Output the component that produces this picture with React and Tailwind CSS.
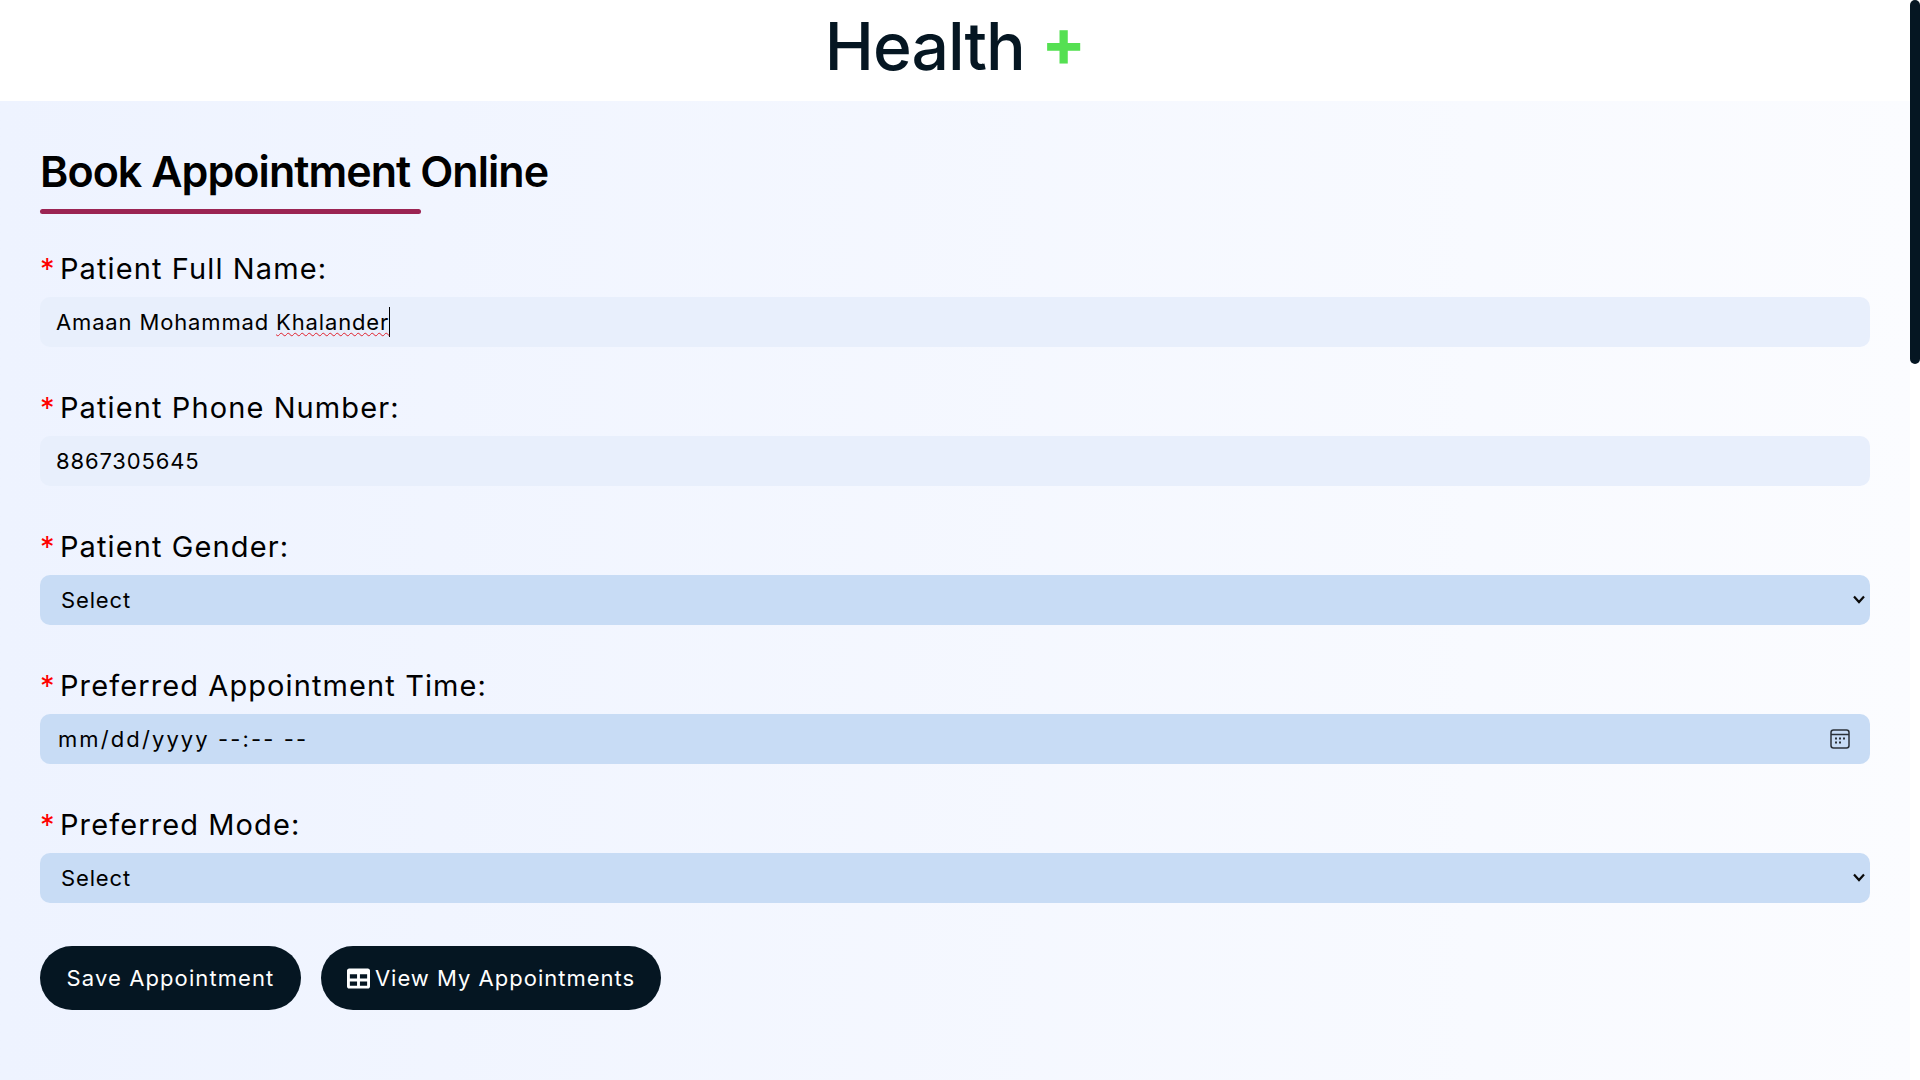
import React from "react";
import { FaTable } from "react-icons/fa";

const body = "font-['Inter','Liberation_Sans',sans-serif]";
const head = "font-['Inter','Liberation_Sans',sans-serif]";
const fieldText = "text-[22px] tracking-[0.85px] text-black";

function Label({ children }) {
  return (
    <label className={`${body} flex items-center h-[50px] text-[29px] tracking-[1.1px] text-black`}>
      <span className="text-[#ff0000] mr-[7px] w-[13px]">*</span>
      {children}
    </label>
  );
}

function Field({ label, children }) {
  return (
    <div className="flex flex-col h-[139px]">
      <div className="h-[89px] flex flex-col justify-end pb-[3px]">
        <Label>{label}</Label>
      </div>
      {children}
    </div>
  );
}

const lightInput = `${body} ${fieldText} w-full h-[50px] rounded-[10px] bg-[#e8effc] px-4 outline-none`;
const strongInput = `${body} ${fieldText} w-full h-[50px] rounded-[10px] bg-[#c8dcf5] outline-none`;

function SelectField({ options }) {
  return (
    <div className="relative">
      <select className={`${strongInput} appearance-none pl-[21px]`} defaultValue="">
        <option value="">Select</option>
        {options.map((o) => (
          <option key={o}>{o}</option>
        ))}
      </select>
      <svg className="absolute right-[5px] top-[20px] w-[12px] h-[9px] pointer-events-none" viewBox="0 0 12 9" fill="none">
        <path d="M1 1.5 L6 7 L11 1.5" stroke="#0a0a0a" strokeWidth="2.2" />
      </svg>
    </div>
  );
}

export default function App() {
  return (
    <div className="flex h-screen w-full overflow-hidden bg-white">
      <div className="flex-1 min-w-0 flex flex-col">
        <header className="h-[101px] flex items-center justify-center bg-white">
          <div className={`${head} text-[66px] font-medium tracking-[-1px] text-[#051622] leading-none pb-[10px]`}>
            Health <span className="inline-block -translate-y-[4px] text-[#55e052] font-bold">+</span>
          </div>
        </header>
        <main className="flex-1 px-10 bg-gradient-to-r from-[#eef3ff] to-[#fbfcff]">
          <h1 className={`${head} mt-[44px] text-[43px] leading-[52px] font-semibold tracking-[-0.95px] text-black`}>
            Book Appointment Online
          </h1>
          <div className="mt-[12px] w-[381px] h-[5px] rounded-full bg-[#9b2453]" />
          <div className="-mt-[6px]">
            <Field label="Patient Full Name:">
              <div className="relative">
                <input className={lightInput} defaultValue="Amaan Mohammad Khalander" spellCheck={false} />
                <div className={`${body} ${fieldText} absolute inset-0 px-4 flex items-center pointer-events-none text-transparent whitespace-pre`}>
                  Amaan Mohammad{" "}
                  <span className="underline decoration-wavy decoration-[#e0202c] decoration-1 underline-offset-[2px] border-r border-black leading-[30px]">Khalander</span>
                </div>
              </div>
            </Field>
            <Field label="Patient Phone Number:">
              <input className={lightInput} defaultValue="8867305645" />
            </Field>
            <Field label="Patient Gender:">
              <SelectField options={["Male", "Female"]} />
            </Field>
            <Field label="Preferred Appointment Time:">
              <div className="relative">
                <input className={`${strongInput} pl-[18px] pr-12 tracking-[2.1px]`} defaultValue="mm/dd/yyyy --:-- --" />
                <svg className="absolute right-[20px] top-[15px] w-[20px] h-[20px] pointer-events-none" viewBox="0 0 20 20" fill="none">
                  <rect x="1" y="1" width="18" height="18" rx="2.5" stroke="#2b3138" strokeWidth="1.5" />
                  <path d="M1 5.5 H19" stroke="#2b3138" strokeWidth="1.5" />
                  <rect x="5" y="8.5" width="2" height="2" fill="#2b3138" />
                  <rect x="9" y="8.5" width="2" height="2" fill="#2b3138" />
                  <rect x="13" y="8.5" width="2" height="2" fill="#2b3138" />
                  <rect x="5" y="12.5" width="2" height="2" fill="#2b3138" />
                  <rect x="9" y="12.5" width="2" height="2" fill="#2b3138" />
                </svg>
              </div>
            </Field>
            <Field label="Preferred Mode:">
              <SelectField options={["Online", "In person"]} />
            </Field>
          </div>
          <div className="mt-[43px] flex gap-5">
            <button className={`${body} h-[64px] w-[261px] rounded-full bg-[#051622] text-white text-[22px] tracking-[1.1px]`}>
              Save Appointment
            </button>
            <button className={`${body} h-[64px] w-[340px] rounded-full bg-[#051622] text-white text-[22px] tracking-[1px] flex items-center justify-center gap-[5px]`}>
              <FaTable className="w-[23px] h-[23px]" />
              View My Appointments
            </button>
          </div>
        </main>
      </div>
      <aside className="w-[10px] bg-white">
        <div className="h-[364px] rounded-full bg-[#051622]" />
      </aside>
    </div>
  );
}
